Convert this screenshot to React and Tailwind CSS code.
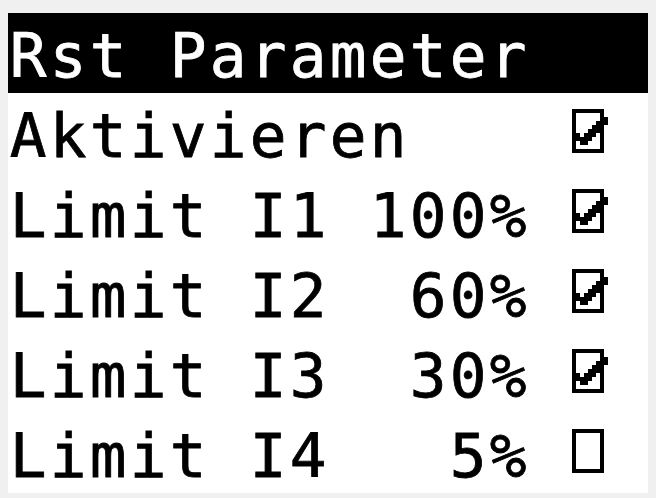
const lines = [
  { text: "Rst Parameter", box: null, header: true },
  { text: "Aktivieren    ", box: true },
  { text: "Limit I1 100% ", box: true },
  { text: "Limit I2  60% ", box: true },
  { text: "Limit I3  30% ", box: true },
  { text: "Limit I4   5% ", box: false },
];

const COLS = 16;

const CheckBox = ({ checked }) => (
  <svg
    className="block"
    width="40"
    height="80"
    viewBox="0 0 40 80"
    shapeRendering="crispEdges"
  >
    <rect x="4" y="16" width="32" height="4" fill="#000" />
    <rect x="4" y="56" width="32" height="4" fill="#000" />
    <rect x="4" y="16" width="4" height="44" fill="#000" />
    <rect x="32" y="16" width="4" height="44" fill="#000" />
    {checked && (
      <g fill="#000">
        <rect x="32" y="24" width="8" height="4" />
        <rect x="28" y="28" width="12" height="4" />
        <rect x="24" y="32" width="12" height="4" />
        <rect x="20" y="36" width="12" height="4" />
        <rect x="8" y="40" width="4" height="4" />
        <rect x="16" y="40" width="12" height="4" />
        <rect x="8" y="44" width="16" height="4" />
        <rect x="12" y="48" width="8" height="4" />
      </g>
    )}
  </svg>
);

const Row = ({ line }) => {
  const chars = line.text.padEnd(COLS, " ").split("");
  return (
    <div
      className={`grid grid-cols-[repeat(16,40px)] h-[80px] ${
        line.header ? "bg-black text-white" : "bg-white text-black"
      }`}
    >
      {chars.map((ch, i) =>
        i === 14 && line.box !== null ? (
          <div key={i} className="h-[80px] w-[40px]">
            <CheckBox checked={line.box} />
          </div>
        ) : (
          <div
            key={i}
            className="h-[80px] w-[40px] text-center text-[61px] leading-[86px] whitespace-pre [-webkit-text-stroke:0.8px_currentColor]"
          >
            {ch}
          </div>
        )
      )}
    </div>
  );
};

export default function App() {
  return (
    <div
      className="w-[656px] h-[498px] bg-[#f0f0f0] pt-[13px] pl-[8px]"
      style={{ fontFamily: '"DejaVu Sans Mono", "Liberation Mono", monospace' }}
    >
      <div className="w-[640px] h-[480px] bg-white flex flex-col">
        {lines.map((line, i) => (
          <Row key={i} line={line} />
        ))}
      </div>
    </div>
  );
}
